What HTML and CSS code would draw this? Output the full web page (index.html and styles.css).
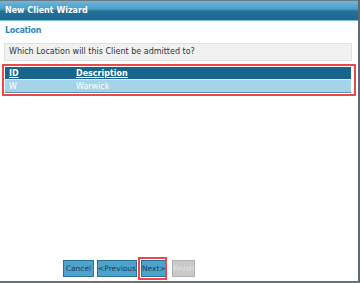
FILE: index.html
```html
<!DOCTYPE html>
<html>
<head>
<meta charset="utf-8">
<link rel="stylesheet" href="styles.css">
</head>
<body>
<div class="window">
  <div class="titlebar">New Client Wizard</div>
  <div class="content">
    <div class="section-title">Location</div>
    <div class="prompt">Which Location will this Client be admitted to?</div>
    <div class="highlight">
      <table class="grid">
        <thead>
          <tr><th class="col-id">ID</th><th>Description</th></tr>
        </thead>
        <tbody>
          <tr class="selected"><td class="col-id">W</td><td>Warwick</td></tr>
        </tbody>
      </table>
    </div>
    <div class="spacer"></div>
    <div class="buttons">
      <button class="btn btn-cancel">Cancel</button>
      <button class="btn btn-prev">&lt;Previous</button>
      <span class="btn-highlight"><button class="btn btn-next">Next&gt;</button></span>
      <button class="btn btn-finish disabled">Finish</button>
    </div>
  </div>
</div>
</body>
</html>
```

FILE: styles.css
```css
html, body {
  margin: 0;
  padding: 0;
  background: #ffffff;
}
body {
  width: 360px;
  height: 283px;
  overflow: hidden;
  font-family: "DejaVu Sans", Verdana, sans-serif;
}
.window {
  box-sizing: border-box;
  width: 360px;
  height: 283px;
  border-right: 2px solid #5d6870;
  border-bottom: 2px solid #6a7278;
  display: flex;
  flex-direction: column;
}
.titlebar {
  height: 19px;
  border-top: 1px solid #6c7a84;
  border-bottom: 1px solid #7cc0e0;
  background: linear-gradient(to bottom, #6cb6da 0%, #4f9fc8 40%, #236f98 55%, #1d6890 100%);
  color: #ffffff;
  font-weight: bold;
  font-size: 8px;
  line-height: 19px;
  padding-left: 5px;
}
.content {
  flex: 1;
  display: flex;
  flex-direction: column;
  padding: 0 2px 0 2px;
}
.section-title {
  color: #2e88bd;
  font-weight: bold;
  font-size: 8px;
  letter-spacing: -0.3px;
  line-height: 20px;
  padding-left: 3px;
}
.prompt {
  margin: 2px 0 0 2px;
  width: 342px;
  height: 16px;
  background: #f1f1f1;
  border: 1px solid #e0e0e0;
  color: #333333;
  font-size: 8px;
  line-height: 16px;
  padding-left: 4px;
}
.highlight {
  margin-top: 3px;
  width: 346px;
  border: 2px solid #e8494b;
  padding: 1px 3px 1px 1px;
}
.grid {
  width: 346px;
  border-collapse: collapse;
  font-size: 8px;
}
.grid th {
  background: #17648c;
  color: #ffffff;
  text-align: left;
  text-decoration: underline;
  font-weight: bold;
  height: 12px;
  padding: 0 0 0 4px;
  border-bottom: 1px solid #d7ecf7;
}
.grid td {
  background: #a5d3ea;
  color: #ffffff;
  height: 12px;
  padding: 0 0 0 4px;
  border-bottom: 1px solid #5b8faa;
}
.grid .col-id {
  width: 63px;
}
.spacer {
  flex: 1;
}
.buttons {
  display: flex;
  align-items: center;
  padding-left: 61px;
  height: 24px;
  margin-bottom: 1px;
}
.btn {
  font-family: "DejaVu Sans", Verdana, sans-serif;
  font-size: 7.5px;
  height: 17px;
  padding: 0;
  margin: 0;
  background: #4ea3cd;
  border: 1px solid #2a7098;
  color: #14405c;
  border-radius: 0;
  white-space: nowrap;
  overflow: hidden;
}
.btn-cancel { width: 31px; }
.btn-prev { width: 40px; margin-left: 3px; }
.btn-next { width: 25px; }
.btn-finish { width: 23px; }
.btn-highlight {
  position: relative;
  display: inline-flex;
  margin: 0 6px 0 4px;
}
.btn-highlight::after {
  content: "";
  position: absolute;
  top: -3px;
  bottom: -3px;
  left: -3px;
  right: -1px;
  border: 2px solid #e8494b;
  pointer-events: none;
}
.btn.disabled {
  background: #c9c9c9;
  border-color: #b0b0b0;
  color: #e4e4e4;
}
```
